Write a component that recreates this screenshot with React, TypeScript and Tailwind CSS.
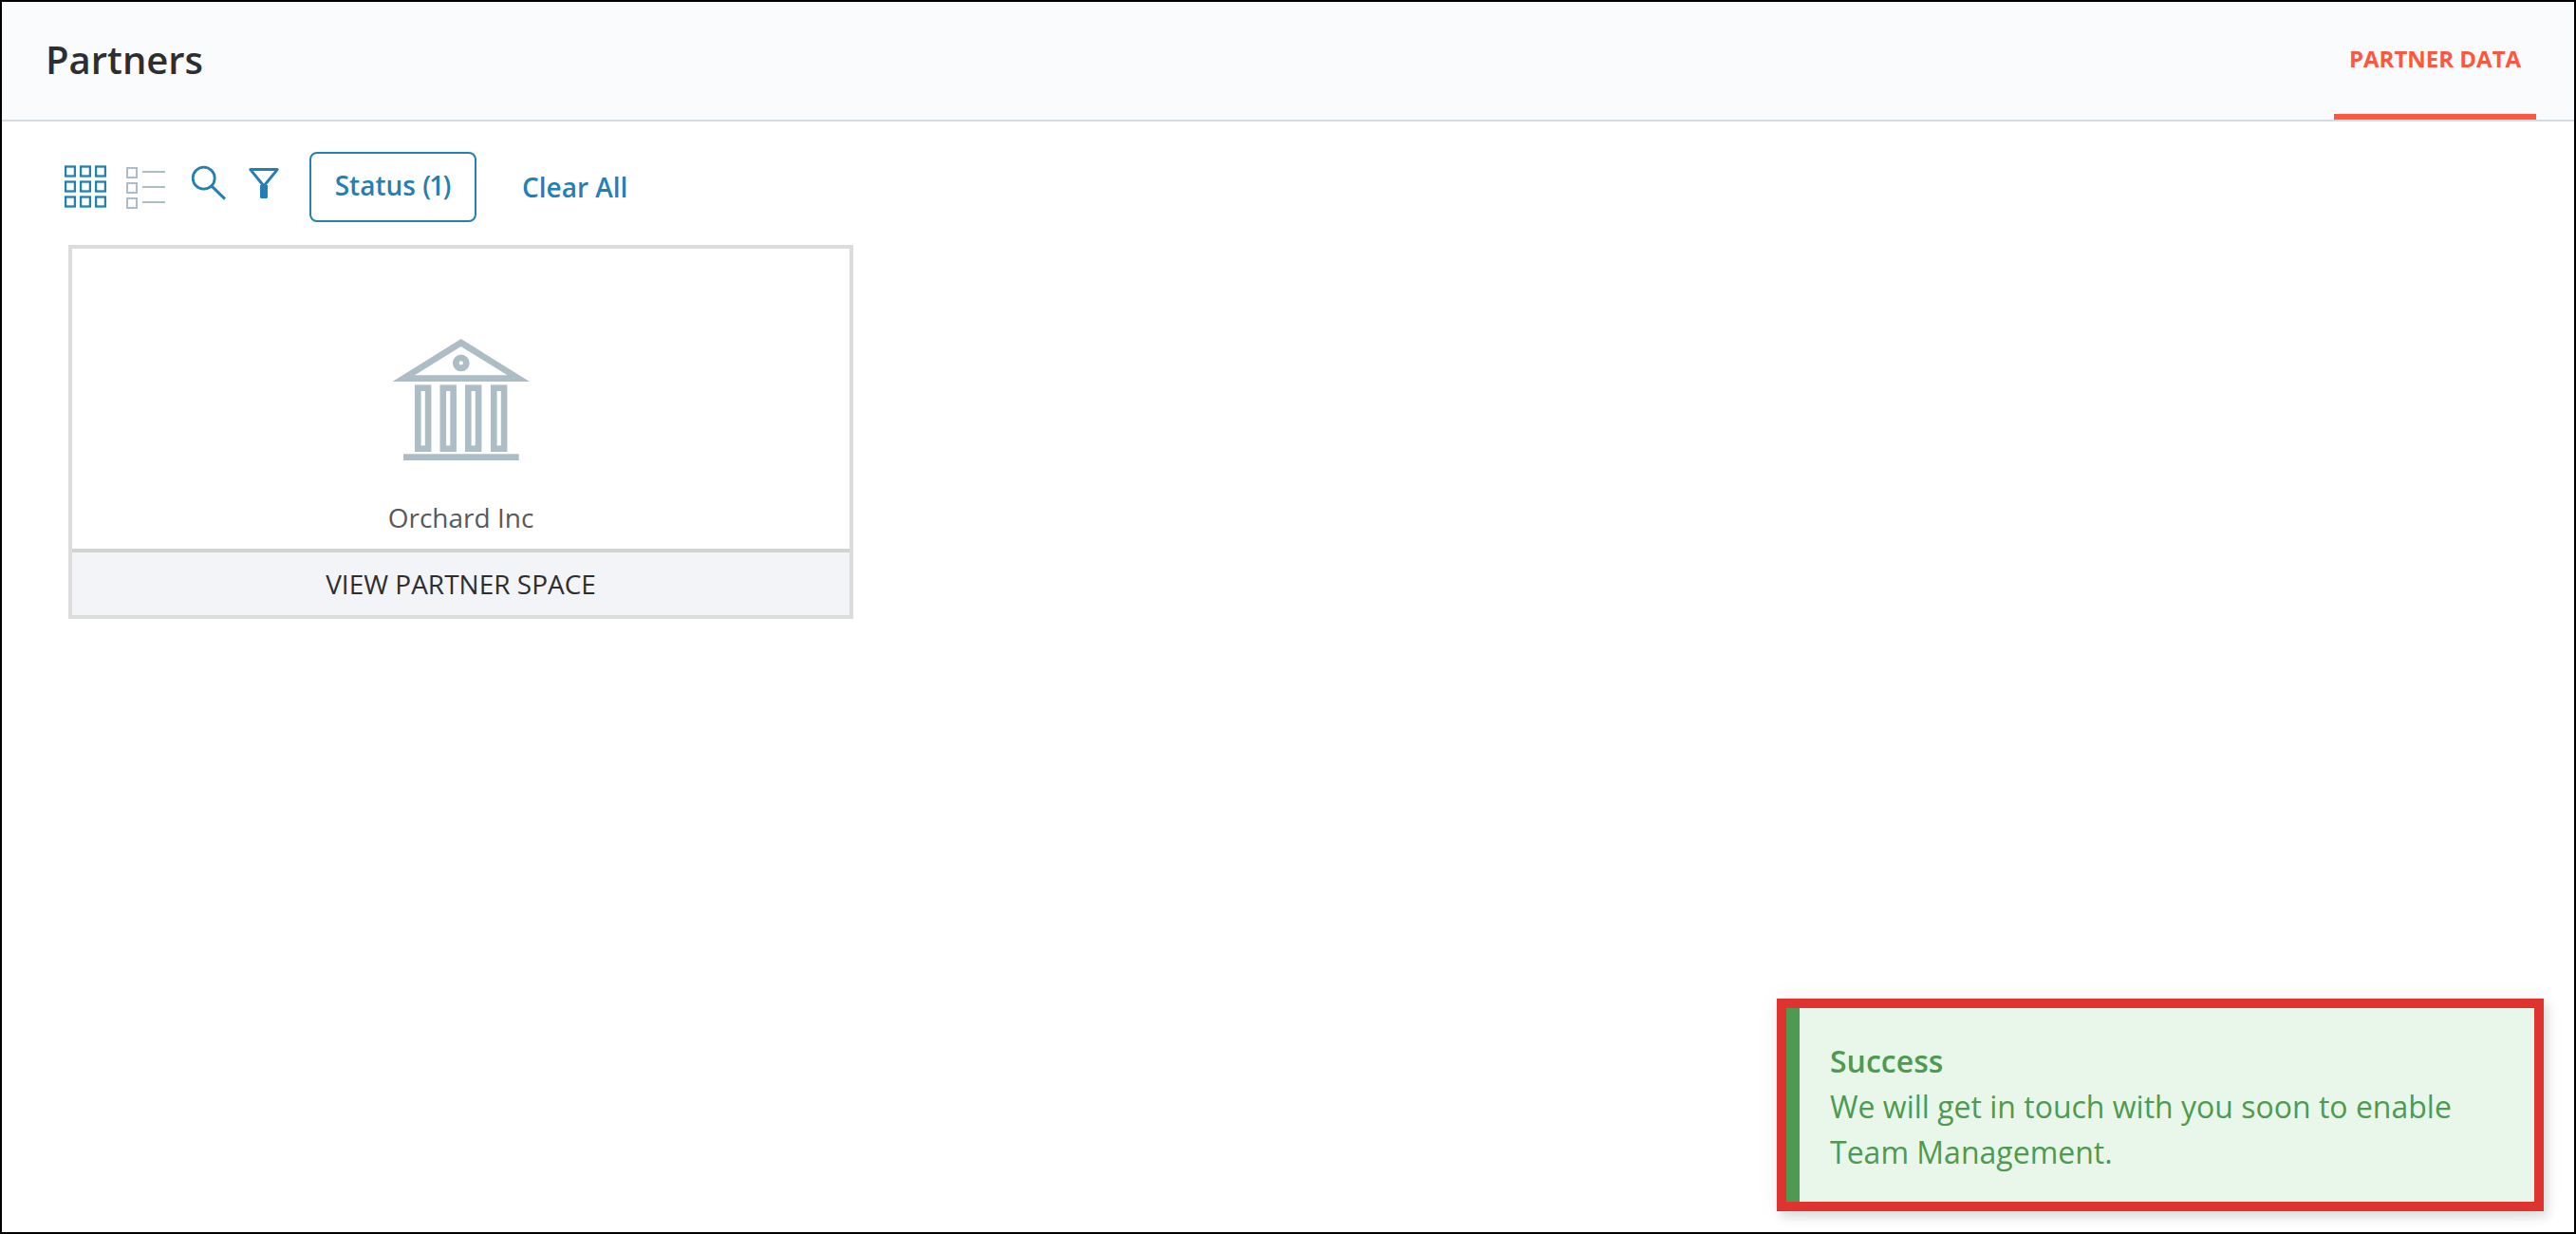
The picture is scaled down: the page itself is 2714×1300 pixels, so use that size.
const cells = [0, 16, 32];
const pillars = [24, 50.5, 77, 104];

function GridIcon() {
  return (
    <svg width="44" height="46" viewBox="0 0 44 46" fill="none" stroke="#247fb5" strokeWidth="2.3">
      {cells.map((y) => cells.map((x) => <rect key={`${x}-${y}`} x={x + 1.1} y={y + 1.5} width="9.8" height="10" />))}
    </svg>
  );
}

function ListIcon() {
  return (
    <svg width="42" height="46" viewBox="0 0 42 46" fill="none" stroke="#adbdc7" strokeWidth="2">
      {cells.map((y) => <g key={y}><rect x="1" y={y + 1} width="10" height="10" /><path d={`M17 ${y + 5}h24`} /></g>)}
    </svg>
  );
}

function SearchIcon() {
  return (
    <svg width="38" height="38" viewBox="0 0 38 38" fill="none" stroke="#247fb5" strokeWidth="2.8">
      <circle cx="13.7" cy="13.7" r="11.5" />
      <path d="M21.8 21.8 36 35.6" strokeWidth="3" />
    </svg>
  );
}

function FilterIcon() {
  return (
    <svg width="32" height="32" viewBox="0 0 32 32" fill="none" stroke="#247fb5" strokeWidth="3" strokeLinejoin="round">
      <path d="M1.8 1.6h28.4L16 19Z" />
      <path d="M12 18h8v12.5q0 1.5-1.5 1.5h-5q-1.5 0-1.5-1.5Z" fill="#247fb5" stroke="none" />
    </svg>
  );
}

function BankIcon() {
  return (
    <svg width="146" height="128" viewBox="0 0 146 128" fill="#adbdc6">
      <path fillRule="evenodd" d="M72.7 0 145 45H.5ZM72.7 8 24 38.3h97.5Z" />
      <circle cx="72.8" cy="25.4" r="5.5" fill="none" stroke="#adbdc6" strokeWidth="6.7" />
      {pillars.map((x) => <rect key={x} x={x + 3.3} y="51.7" width="10.8" height="64" fill="none" stroke="#adbdc6" strokeWidth="6.6" />)}
      <path d="M12 121.2h121.7v6.8H12Z" />
    </svg>
  );
}

export default function App() {
  return (
    <div className="relative flex h-[1300px] w-[2714px] flex-col border-2 border-black bg-white font-['Open_Sans',sans-serif]">
      <header className="flex h-[126px] items-stretch justify-between border-b-2 border-[#d3dbe1] bg-[#fafbfd] pr-10 pl-[46px]">
        <h1 className="pt-[31px] text-[40px] leading-[60px] font-semibold text-[#2d2e31]">Partners</h1>
        <button className="flex w-[213px] justify-center border-b-6 border-[#ff573f] pt-[42px] text-2xl leading-9 font-bold whitespace-nowrap text-[#ff573f]">PARTNER DATA</button>
      </header>

      <div className="flex h-[130px] items-start pt-8 pl-[66px] text-[#247fb5]">
        <button aria-label="Grid view" className="mt-[14px]"><GridIcon /></button>
        <button aria-label="List view" className="mt-4 ml-[21px]"><ListIcon /></button>
        <button aria-label="Search" className="mt-[14px] ml-[26px]"><SearchIcon /></button>
        <button aria-label="Filter" className="mt-[17px] ml-[23px]"><FilterIcon /></button>
        <button className="ml-8 h-[74px] w-44 rounded-lg border-2 border-[#247fb5] pb-1 text-[28px] leading-10 font-semibold whitespace-nowrap">Status <span className="tracking-[-1.8px]">(1</span>)</button>
        <button className="mt-[17px] ml-12 text-[28px] leading-10 font-semibold whitespace-nowrap">Clear All</button>
      </div>

      <div className="ml-[70px] flex h-[394px] w-[827px] flex-col border-4 border-[#dcdcdc]">
        <div className="flex h-[316px] flex-col items-center pt-[95px]">
          <BankIcon />
          <p className="mt-10 text-[28px] leading-10 text-[#595959]">Orchard Inc</p>
        </div>
        <button className="flex flex-1 items-center justify-center border-t-4 border-[#d3d3d3] bg-[#f3f4f7] text-[28px] leading-10 text-[#2d2e31]">VIEW PARTNER SPACE</button>
      </div>

      <div className="absolute top-[1050px] left-[1870px] h-56 w-[808px] border-10 border-[#df332f] bg-[#e9f7eb] shadow-[0_0_24px_rgba(0,0,0,0.05),4px_6px_10px_rgba(0,0,0,0.12)]">
        <div className="h-full border-l-14 border-[#4e9a50] pt-8 pl-8 text-[32px] leading-[48px] text-[#4e9a50]">
          <p className="font-semibold">Success</p>
          <p className="w-[700px]">We will get in touch with you soon to enable Team Management.</p>
        </div>
      </div>
    </div>
  );
}
